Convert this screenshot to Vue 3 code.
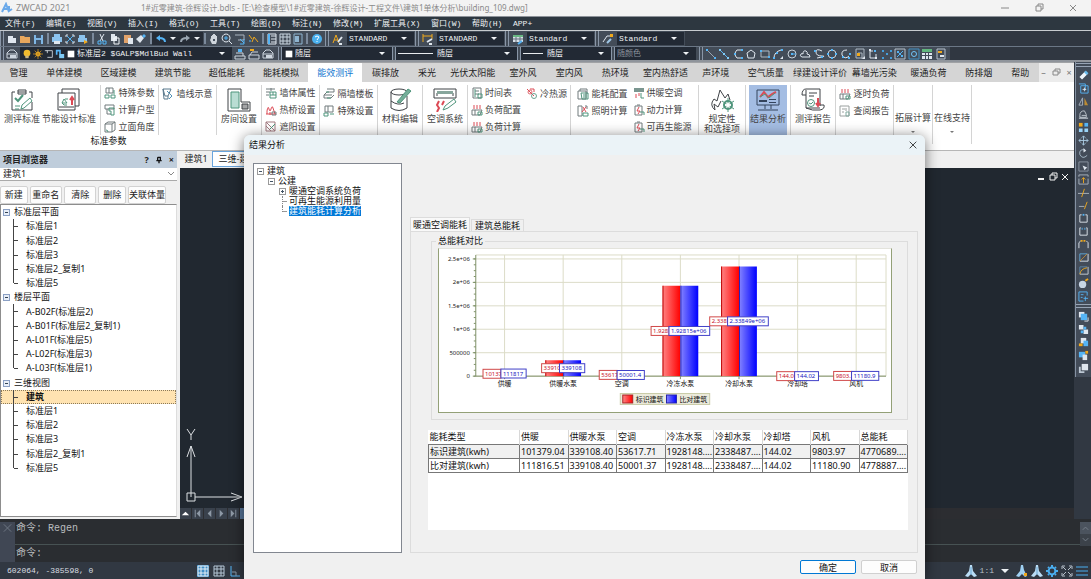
<script setup>
import { h, ref } from 'vue'

const W = '#dfe6ee', B = '#55b4f5', Y = '#f0a91c', G = '#4f957c', R = '#dc4a55', K = '#3f4347', S = '#717a7c'
const line = (d, c = W, w = 1) => `<path d="${d}" fill="none" stroke="${c}" stroke-width="${w}"/>`
const fill = (d, c = W) => `<path d="${d}" fill="${c}"/>`
const grid = (c) => line('M1 1h10v10H1zM1 4h10M1 8h10M4 1v10M8 1v10', c)
const heat = line('M3 1v4M6 1v4M9 1v4', R) + line('M1 6h10l-2 5H1zM4 6v5', S) + line('M7 8h4v3H7z', G)

const icons = {
  file: fill('M2 3h5v2h3v5H2z'),
  folder: fill('M1 3h4l1 1h5v6H1z', '#e8a75d'),
  save: fill('M2 2h9v9H2z', '#7fb6e4') + fill('M4 2h5v3H4zM4 7h5v4H4z', '#3f5268'),
  print: fill('M3 1h6v3H3zM1 4h10v5H1z', '#8cc3ee') + fill('M3 8h6v3H3z'),
  preview: line('M2 4V2h2M8 2h2v2M2 8v2h2M8 10h2V8', W) + line('M3 3l6 6M9 3L3 9', B),
  plot: fill('M2 2h6v3H2zM1 5h9v4H1z', '#8cc3ee') + fill('M7 7l4 2-4 2z', Y),
  cut: line('M4 1l3 7M8 1L4 8', W) + line('M2 8h3v3H2zM7 8h3v3H7z', B),
  copy: fill('M2 1h4v2h2v5H2z') + line('M5 5h5v6H5z', '#f5f8fb'),
  paste: fill('M2 2h7v8H2z', '#e2a36b') + fill('M6 5h5v6H6z'),
  brush: fill('M1 6l5-4 3 3-4 5z') + fill('M7 3l2-2 2 2-2 2z', B),
  undo: line('M10 9q0-4-6-4', B, 2) + fill('M1 5l4-3v6z', B),
  redo: line('M2 9q0-4 6-4', '#9aa5b1', 2) + fill('M11 5L7 2v6z', '#9aa5b1'),
  hand: fill('M3 5V3h1V2h1V1h2v1h1v1h1v5l-1 3H4L2 7z', '#cfd5dc') + fill('M5 6h2v2H5z', '#4b5563'),
  zoom: line('M5 1a4 4 0 1 0 .1 0M8 8l3 3') + line('M5 3v4M3 5h4', B),
  zoomwin: line('M1 2h9v5H4', '#aab4bf') + line('M6 6l4 4M10 6v5H6', B),
  zoomprev: line('M2 2l3 4M5 9l2-5 4 5', Y) + line('M2 8h2', B),
  props: line('M2 1h8v10H2zM5 3h5M5 6h5M5 9h5', W) + fill('M2 1h2v10H2z', B),
  design: grid('#c8d4df'),
  palette: line('M2 1h8v10H2z', '#8fb4d0') + fill('M3 3h4v6H3z', '#8fb4d0'),
  help: '<circle cx="6" cy="6" r="5" fill="#4bb0ee"/>' + line('M4 4q2-2 4 0L6 7M6 8v1', '#fff'),
  textstyle: line('M1 10L4 2l3 8M2 7h4', Y) + line('M6 9l4-5M7 11h3', W, 2),
  dim: line('M1 1v8M10 1v5M1 3h9', Y) + line('M5 9l5-3M7 11h3', W, 2),
  tablestyle: fill('M1 2h10v7H1z', '#d8dfe6') + fill('M1 2h10v2H1z', '#69b783') + line('M4 4v5M8 4v5M1 6h10', '#65717e') + line('M6 11l4-3', B, 2),
  mleader: line('M1 9l4-6h4', W) + fill('M8 1h3v3H8z', Y) + line('M5 10l4-4', '#9fc6e5', 2),
  layers: line('M1 5l3-3h4l3 3v5H1zM1 6h10', '#cdd5de') + fill('M4 7h6v3H4z', '#cdd5de'),
  layer2: line('M1 8h10v3H1zM2 5h7v3', '#cdd5de') + fill('M4 1h4v3H4z', B),
  layer3: line('M1 7h10v4H1zM2 7l2-3h6', '#cdd5de') + fill('M2 1h4v2H2z', Y),
  bulb: '<circle cx="6" cy="5" r="4" fill="#f1bb2e"/>' + fill('M4 8h4v3H4z', '#cbb782'),
  sun: '<circle cx="6" cy="6" r="3" fill="#f3b51f"/>' + line('M6 0v12M0 6h12M2 2l8 8M10 2l-8 8', '#c68d25'),
  frame: line('M3 2h7v8H4M1 2h3v3', '#d8dde3'),
  lock: line('M2 7V2h4v4', B, 2) + fill('M5 6h6v5H5z', '#7fcaf5'),
  white: fill('M2 2h8v8H2z', '#fff'),
  ln: line('M2 2l8 8', '#9aa6b3') + fill('M1 1h2v2H1zM9 9h2v2H9z', B),
  cline: line('M2 2l8 8', B) + fill('M1 1h2v2H1zM9 9h2v2H9zM5 5h2v2H5z', '#81ccf7'),
  pline: line('M9 2H5Q1 6 5 10h5', W) + fill('M9 1h2v2H9zM9 9h2v2H9zM2 5h2v2H2z', B),
  polygon: line('M6 2l4 3-1 5H3L2 5z', W, 1),
  rect: line('M2 3h8v6H2z', '#aeb8c3') + fill('M1 2h2v2H1zM9 8h2v2H9z', B),
  arc: line('M2 10Q2 4 9 2', W) + fill('M1 9h2v2H1zM4 4h2v2H4zM9 1h2v2H9z', B) + fill('M11 8v3H8z'),
  circle: '<circle cx="6" cy="6" r="4" fill="none" stroke="#c8d1da"/>' + line('M6 6h4', B) + fill('M5 5h2v2H5z', B),
  cloud: line('M3 9q-3-1-1-3 1-1 2 0 0-4 3-3 2 1 1 3 3 0 3 3z'),
  spline: line('M9 3Q3 0 3 4t6 4-5 2') + fill('M1 2h2v2H1zM8 8h2v2H8z', B),
  ellipse: '<circle cx="6" cy="6" r="4" fill="none" stroke="#c8d1da"/>' + fill('M5 1h2v2H5zM1 5h2v2H1zM9 5h2v2H9zM5 9h2v2H5z', B),
  earc: line('M7 2Q1 2 2 7q3 5 7 1') + fill('M9 5h2v2H9zM2 8h2v2H2zM8 9h2v2H8z', B),
  insert: line('M2 1h8v9H2zM4 5h4v6', '#aeb8c3') + fill('M3 5h3v3H3z', Y) + fill('M11 8v3H8z'),
  block: line('M3 3v7h6V6M3 3h3', W) + fill('M7 2h2v2H7z', B) + fill('M2 1h2v2H2zM8 9h2v2H8z'),
  point: fill('M1 2h2v2H1zM9 2h2v2H9zM5 5h2v2H5zM1 9h2v2H1zM9 9h2v2H9z', '#459edb'),
  hatch: line('M1 1h10v10H1z', '#b6c0cb') + line('M3 9l6-6M3 5l2-2M7 9l2-2M3 3l6 6', B),
  region: line('M1 1h10v10H1z', '#438fc2') + '<circle cx="6" cy="6" r="2.5" fill="none" stroke="#70c5fa"/>',
  table: fill('M1 1h10v3H1z', '#61b67d') + fill('M1 5h3v2H1zM5 5h2v2H5zM8 5h3v2H8zM1 8h3v3H1zM5 8h2v3H5zM8 8h3v3H8z'),
  mtext: line('M2 1h8v10H2z', '#b6c0cb') + fill('M3 3h4v2H3z', Y) + fill('M5 7h4v2H5z'),
  erase: line('M3 9l6-6', '#eff5fb', 4) + line('M8 4l2-2', '#69bbed', 4),
  copyobj: line('M1 1h7v7M3 3h8v8H3z', B) + line('M7 5v4M5 7h4', W),
  mirror: line('M5 2v8H1z', '#aab4bf') + fill('M7 2v8h4z', '#bb8b35'),
  offset: line('M2 7q0-5 5-5l2 4v3H2zM4 7h5', '#c0c7ce') + line('M1 10h10', W),
  array: fill('M1 1h4v4H1z', Y) + fill('M7 1h4v4H7z', B) + fill('M1 7h4v4H1zM7 7h4v4H7z', '#9ad3f6'),
  move: line('M6 1v10M1 6h10M4 3l2-2 2 2M4 9l2 2 2-2M3 4L1 6l2 2M9 4l2 2-2 2', '#a9c9e0'),
  rotate: line('M7 2Q1 1 2 7q3 6 8 1', '#a9bccb') + fill('M6 0l3 3-3 2z', W),
  scale: line('M1 1h10v10H1z', '#8c96a3') + fill('M5 5l5 2-3 3z', W),
  stretch: line('M1 3V1h10v2M1 5v6h10V5', '#abb4be') + line('M6 10V4M4 6l2-2 2 2', Y),
  trim: line('M0 7h12', '#adb5bd') + line('M7 2L4 11', Y),
  extend: line('M1 7h6', '#adb5bd') + line('M10 2L7 10', Y),
  brk: line('M4 2H2v8h8V2H8') + fill('M5 1h2v2H5z', B),
  brk2: line('M3 2H2v8h8V2H9') + fill('M4 2h1v2H4zM7 2h1v2H7z', B),
  join: line('M1 10V4l2-2M11 10V4L9 2', W) + fill('M3 1h2v2H3zM6 1h2v2H6z', Y),
  chamfer: line('M2 10V2h8', '#5fa8d8') + line('M2 10h9V2', W) + line('M2 10l8-8', '#b9893c'),
  fillet: line('M2 10V2h8', '#5b87a8') + line('M2 10h9V2', '#c9d0d7') + line('M2 10q1-6 8-7', Y),
  explode: '<circle cx="5" cy="7" r="4" fill="#c8d6e5"/>' + line('M8 3l3-2', Y, 2),
  edit: line('M1 1h9v4M1 1v10h5M3 4h3M3 7h2', B) + line('M6 8h5M8 6v5', B),
  front: fill('M1 1h6v6H1z') + fill('M3 3h7v7H3z', B) + line('M7 11h4V7'),
  back: fill('M1 1h5v5H1zM6 6h5v5H6z') + fill('M6 3h3v3H6zM3 7h3v3H3z', B),
  above: fill('M3 1h6v6H3z') + fill('M6 4h5v6H6z', B) + fill('M1 7h4v3H1z', Y),
  under: fill('M1 2h7v6H1z', B) + fill('M5 5h5v6H5z') + fill('M8 1h3v3H8z', Y),
  bring: fill('M4 1h7v7H4z') + line('M2 4v6h5', '#bdc8d4', 2),
  gridon: fill('M0 0h12v12H0z', '#3f8dc5') + grid('#e5eef5'),
  grid: grid('#b6c7d6'),
  ortho: line('M2 1v10h9', B) + line('M3 7h4v4', '#8898a8'),
  annot: fill('M5 0h2l1 6 4 5-3 1-3-3-3 3-3-1 4-5z', '#b9dcf5') + line('M6 2v8', '#6ca9d4'),
  annot2: fill('M5 0h2l1 5 3 6-2 1-3-3-3 3-3-1 4-5z', '#9fd0f2') + fill('M8 8h3v3H8z', Y),
  gear: '<circle cx="6" cy="6" r="3.4" fill="none" stroke="#4aaef0" stroke-width="2"/>' + line('M6 0v2M6 10v2M0 6h2M10 6h2M2 2l1 1M9 9l1 1M10 2L9 3M3 9l-1 1', '#4aaef0', 2),
  full: line('M1 4V1h3M8 1h3v3M1 8v3h3M11 8v3H8M2 2l3 3M10 2L7 5M2 10l3-3M10 10L7 7', '#b7c0ca'),
  burger: line('M0 2h12M0 6h12M0 10h12', '#4aaef0', 1),
  sParam: line('M2 1h7v5H2zM5 1v5', S) + line('M1 8h4v3H1zM7 8h4v3H7zM10 3v4', G),
  sCalc: line('M1 1h9v4H1zM3 5v5h4', S) + line('M5 4h5v7H7V7H5z', G),
  sCube: line('M1 3h7v8H1zM1 3l3-2h7v8l-3 2M8 3l3-2', S) + line('M2 9q2 0 2 2', G),
  sWall: line('M1 1h8L6 8v3H2zM1 1l2 7h3', '#59788c') + line('M5 3l5 5-3 3', '#5393b7'),
  sBrick: line('M1 2h9M1 5h4M1 8h3M6 1v3', S) + line('M5 5h6v6H5zM5 8h6M8 5v3', G),
  sHeat: line('M2 10V7q1-6 2-2t2 0 2-1 2 6M1 10h10M5 8v3', R) + line('M7 8h4v3H7z', S),
  sShade: line('M1 1h9v9H1zM1 1l9 9M1 5l5 5', '#a27a80') + line('M5 8l5-5', G),
  sFloor: line('M4 1h7v3H4L1 7h8M1 7v3h7l3-3', S) + line('M3 4h3M4 10h4', G),
  sSet: line('M2 1h8v6H2zM5 1v6', S) + line('M1 8h4v3H1zM7 9h4', G),
  sTime: line('M2 1h8v10H2zM4 4h4M4 7h4', S) + line('M7 7h4v4H7zM4 2v8', G),
  sLoad: heat,
  sFan: '<circle cx="4" cy="4" r="2" fill="none" stroke="#df6b72"/>' + line('M1 1l7 7M4 1h4v3', R) + '<circle cx="8" cy="8" r="2.5" fill="none" stroke="#6ca291"/>',
  sEnergy: line('M1 3h8v8H1zM3 3V1h7v5', S) + line('M4 5h7v6H5zM6 7h4M6 9h4', G),
  sLight: line('M1 1h4v10H1zM8 1h2v3', S) + line('M6 2l3 5M9 2L5 7', R) + line('M6 8h5v3H6z', G),
  sAir: fill('M1 1h10v4H1z', '#7b9690') + line('M3 7v4M6 6v3', R) + line('M8 6v5h3', G),
  sPower: line('M2 2h7v9H2zM4 1h3', S) + line('M6 3L4 7h3L5 10', R) + line('M7 8h4v3', G),
  sReport: line('M1 1h9v10H1zM3 4h3M3 7h2M7 3v3', '#9aa09f') + line('M7 7h3v4H7z', '#82aaa0'),
  bStd: line('M5 4H2v18h20v-8M8 4h8M19 4h3v6M8 2h8v4H8z', K) + line('M5 10l3 3 5-6', G, 2) + line('M11 21l1-4 8-7 2 3-8 7zM5 18h5M5 21h4', G),
  bDesign: line('M5 5V1h17v17h-4M1 5h17v17H1z', K) + line('M5 15l2-4 3 4zM5 15l2 2h3M8 11h3', G) + line('M15 17V10M13 12l2-3 2 3', R, 2) + line('M2 19h15', K),
  bRoom: line('M1 1h13v13h9v9H1z', K) + fill('M4 4h8v16H4z', '#b9ddd3') + line('M4 4h8v16H4z', G) + fill('M15 16h6v5h-6z', '#a4a5a7') + line('M15 16h6v5h-6z', K),
  bMat: '<ellipse cx="11" cy="4" rx="8" ry="3" fill="none" stroke="#3f4347"/>' + line('M3 4v16q8 5 16 0V8M3 13q7 5 13 2', K) + fill('M9 14L20 1l3 2-11 12z', '#75ad99') + line('M9 14L20 1l3 2-11 12z', G),
  bAir: line('M1 1h22v9H1zM4 8V5h16v3', K) + fill('M4 3h16v3H4z', '#87a69c') + line('M6 13l-2 4 2 3-2 4M11 13l-2 4', R, 2) + line('M10 22l2-4 9-7 2 3-8 6z', G),
  bFire: line('M5 22Q-1 17 4 11l3 2 3-11 5 8 3-4 2 6M5 22l-1-6 4 3 3-6', K, 1) + '<circle cx="18" cy="17" r="4" fill="none" stroke="#4f957c" stroke-width="2"/>' + line('M18 10v14M12 13l12 8M24 13l-12 8', G) + '<circle cx="18" cy="17" r="2" fill="#fff"/>',
  bResult: line('M1 2h22v15H1zM9 17v4M15 17v4M2 22h20', '#34445c', 1) + line('M4 9l4-5 4 5 4-3 4-2', R, 2) + line('M4 9l5-3 4 4 6-5', G) + fill('M3 12h8v2H3zM13 11h7v1h-7zM13 14h7v1h-7z', '#34445c'),
  bReport: line('M5 7H1Q1 1 5 1h14v17M5 2v18h14M5 20q6 3 14 2 5-1 4-5h-4', K) + line('M8 5h8M8 8h5', K) + '<circle cx="10" cy="15" r="3.5" fill="none" stroke="#4f957c"/>' + line('M8 15l2 1 2-2', G) + line('M17 10v7M15 15l2 3 2-3', R, 2),
}
const Icon = (p) => h('svg', { class: 'icon', viewBox: p.big ? '0 0 24 24' : '0 0 12 12', 'aria-hidden': 'true', innerHTML: icons[p.name] })
Icon.props = ['name', 'big']

const menus = ['文件(F)', '编辑(E)', '视图(V)', '插入(I)', '格式(O)', '工具(T)', '绘图(D)', '标注(N)', '修改(M)', '扩展工具(X)', '窗口(W)', '帮助(H)', 'APP+']
const fileTools = [['file', 'folder', 'save'], ['print', 'preview', 'plot'], ['cut', 'copy', 'paste', 'brush']]
const styles = [['textstyle', 'STANDARD'], ['dim', 'STANDARD'], ['tablestyle', 'Standard'], ['mleader', 'Standard']]
const drawTools = ['ln', 'cline', 'pline', 'polygon', 'rect', 'arc', 'circle', 'cloud', 'spline', 'ellipse', 'earc', 'insert', 'block', 'point', 'hatch', 'region', 'table', 'mtext']
const modifyTools = ['erase', 'copyobj', 'mirror', 'offset', 'array', 'move', 'rotate', 'scale', 'stretch', 'trim', 'extend', 'brk', 'brk2', 'join', 'chamfer', 'fillet', 'explode', 'edit']
const orderTools = ['front', 'back', 'above', 'under', 'bring']
const tabs = ['管理', '单体建模', '区域建模', '建筑节能', '超低能耗', '能耗模拟', '能效测评', '碳排放', '采光', '光伏太阳能', '室外风', '室内风', '热环境', '室内热舒适', '声环境', '空气质量', '绿建设计评价', '幕墙光污染', '暖通负荷', '防排烟', '帮助']
const activeTab = ref('能效测评')

const stdGroups = [
  { w: 'w100', big: [['bStd', '测评标准'], ['bDesign', '节能设计标准']] },
  { w: 'w57', cols: [[['sParam', '特殊参数'], ['sCalc', '计算户型'], ['sCube', '立面角度']]] },
  { w: 'w59', cols: [[['sWall', '墙线示意']]] },
]
const groups = [
  { w: 'w45', big: [['bRoom', '房间设置']] },
  { w: 'w57', cols: [[['sBrick', '墙体属性'], ['sHeat', '热桥设置'], ['sShade', '遮阳设置']]] },
  { w: 'w59', cols: [[['sFloor', '隔墙楼板'], ['sSet', '特殊设置']]] },
  { w: 'w45', big: [['bMat', '材料编辑']] },
  { w: 'w45', big: [['bAir', '空调系统']] },
  { w: 'w103', cols: [[['sTime', '时间表'], ['sLoad', '负荷配置'], ['sLoad', '负荷计算']], [['sFan', '冷热源']]] },
  { w: 'w128', cols: [[['sEnergy', '能耗配置'], ['sLight', '照明计算']], [['sAir', '供暖空调'], ['sPower', '动力计算'], ['sPower', '可再生能源']]] },
  { w: 'w47', big: [['bFire', '规定性\n和选择项']] },
  { w: 'w45', big: [['bResult', '结果分析', true]] },
  { w: 'w45', big: [['bReport', '测评报告']] },
  { w: 'w57', cols: [[['sLoad', '逐时负荷'], ['sReport', '查阅报告']]] },
  { w: 'w39', drop: '拓展计算' },
  { w: 'w39', drop: '在线支持' },
]

const project = [
  { root: '标准层平面' },
  '标准层1', '标准层2', '标准层3', '标准层2_复制1', '标准层5',
  { root: '楼层平面' },
  'A-B02F(标准层2)', 'A-B01F(标准层2_复制1)', 'A-L01F(标准层5)', 'A-L02F(标准层3)', 'A-L03F(标准层1)',
  { root: '三维视图' },
  '建筑', '标准层1', '标准层2', '标准层3', '标准层2_复制1', '标准层5',
].map((r, i, a) => ({ root: !!r.root, text: r.root || r, last: !a[i + 1] || !!a[i + 1].root, sel: r === '建筑' }))

const yOf = (v) => 128 - (v / 500000) * 23.6
const ticks = [[0, '0'], [500000, '500000'], [1e6, '1e+06'], [1.5e6, '1.5e+06'], [2e6, '2e+06'], [2.5e6, '2.5e+06']]
const minorTicks = Array.from({ length: 21 }, (_, i) => 128 - i * 5.9)
const tagWidth = (t) => [...t].reduce((s, c) => s + (c === '.' ? 2 : 3.4), 5)
const chart = [
  ['供暖', 101379, '10137', 111817, '111817'],
  ['供暖水泵', 339108, '33910', 339108, '339108'],
  ['空调', 53617, '53617', 50001, '50001.4'],
  ['冷冻水泵', 1928150, '1.928', 1928150, '1.92815e+06'],
  ['冷却水泵', 2338490, '2.338', 2338490, '2.33849e+06'],
  ['冷却塔', 144, '144.0', 144, '144.02'],
  ['风机', 9804, '9803.', 11181, '11180.9'],
].map(([name, a, at, b, bt], i) => {
  const x = 66 + i * 59
  const right = x + 9 - tagWidth(bt) / 2
  const bar = (v, t, cls, left, tagX, w) => ({ cls, left, top: yOf(v), height: 128 - yOf(v), mid: (yOf(v) + 128) / 2, text: t, tagX, w })
  return { name, x, bars: [bar(a, at, 'red', x - 18, right - 18, 18), bar(b, bt, 'blue', x, right, tagWidth(bt))] }
})
const columns = ['能耗类型', '供暖', '供暖水泵', '空调', '冷冻水泵', '冷却水泵', '冷却塔', '风机', '总能耗']
const rows = [
  ['标识建筑(kwh)', '101379.04', '339108.40', '53617.71', '1928148....', '2338487....', '144.02', '9803.97', '4770689....'],
  ['比对建筑(kwh)', '111816.51', '339108.40', '50001.37', '1928148....', '2338487....', '144.02', '11180.90', '4778887....'],
]
</script>

<template>
  <div class="app">
    <header class="titlebar">
      <svg class="logo" viewBox="0 0 12 12"><path d="M1 10L5 2l3 8M3 7h3M8 4v5l3-2" fill="none" stroke="#6aa9ea" stroke-width="2" /></svg>
      <span class="product">ZWCAD 2021</span>
      <span class="doc">1#近零建筑-徐辉设计.bdls - [E:\检查模型\1#近零建筑-徐辉设计-工程文件\建筑1单体分析\building_109.dwg]</span>
      <div class="wins">
        <button aria-label="最小化"><svg viewBox="0 0 12 12"><path d="M2 6h8" /></svg></button>
        <button aria-label="还原"><svg viewBox="0 0 12 12"><path d="M3 4h5v5H3zM5 4V2h5v5H8" /></svg></button>
        <button aria-label="关闭"><svg viewBox="0 0 12 12"><path d="M3 3l6 6M9 3l-6 6" /></svg></button>
      </div>
    </header>

    <nav class="menubar">
      <button v-for="m in menus" :key="m" :class="{ wide: m.length > 6 }">{{ m }}</button>
    </nav>

    <div class="toolrow">
      <div class="bar first">
        <i class="grip"></i>
        <template v-for="(g, i) in fileTools" :key="i">
          <div class="set"><button v-for="n in g" :key="n" :aria-label="n"><Icon :name="n" /></button></div>
          <i class="sep"></i>
        </template>
        <div class="undo">
          <button aria-label="undo"><Icon name="undo" /></button><i class="tri"></i>
          <button aria-label="redo"><Icon name="redo" /></button><i class="tri"></i>
        </div>
        <i class="sep"></i>
        <div class="set"><button v-for="n in ['hand', 'zoom', 'zoomwin', 'zoomprev']" :key="n" :aria-label="n"><Icon :name="n" /></button></div>
        <i class="sep"></i>
        <div class="set"><button v-for="n in ['props', 'design', 'palette']" :key="n" :aria-label="n"><Icon :name="n" /></button></div>
        <i class="sep"></i>
        <div class="set"><button aria-label="help"><Icon name="help" /></button></div>
      </div>
      <div v-for="(s, i) in styles" :key="i" class="bar stylebar">
        <i class="grip"></i>
        <Icon :name="s[0]" />
        <label class="drop"><select :aria-label="s[0]"><option>{{ s[1] }}</option></select><i class="tri"></i></label>
      </div>
    </div>

    <div class="toolrow second">
      <div class="bar layerbar">
        <i class="grip"></i>
        <button aria-label="图层"><Icon name="layers" /></button>
        <label class="drop">
          <Icon name="bulb" /><Icon name="sun" /><Icon name="frame" /><Icon name="lock" /><Icon name="white" />
          <select aria-label="当前图层"><option>标准层2 $GALP$MdlBud Wall</option></select><i class="tri"></i>
        </label>
        <button aria-label="layer2"><Icon name="layer2" /></button>
        <button aria-label="layer3"><Icon name="layer3" /></button>
        <button aria-label="layers"><Icon name="layers" /></button>
      </div>
      <div class="bar colorbar"><i class="grip"></i><label class="drop"><Icon name="white" /><select aria-label="颜色"><option>随层</option></select><i class="tri"></i></label></div>
      <div class="bar typebar"><i class="grip"></i><label class="drop"><i class="sample long"></i><select aria-label="线型"><option>随层</option></select><i class="tri"></i></label></div>
      <div class="bar weightbar"><i class="grip"></i><label class="drop"><i class="sample"></i><select aria-label="线宽"><option>随层</option></select><i class="tri"></i></label></div>
      <div class="bar plotbar"><i class="grip"></i><label class="drop dim"><select aria-label="打印样式"><option>随颜色</option></select><i class="tri"></i></label></div>
      <div class="bar drawbar"><i class="grip"></i><button v-for="n in drawTools" :key="n" :aria-label="n"><Icon :name="n" /></button></div>
    </div>

    <div class="workspace">
      <div class="main">
        <nav class="tabs">
          <button v-for="t in tabs" :key="t" :class="['n' + Math.min(t.length, 4), { active: t === activeTab }]" @click="activeTab = t">{{ t }}</button>
          <div class="mdi"><span>–</span><svg viewBox="0 0 12 12"><path d="M3 4h5v4H3zM5 4V2h5v4H8" /></svg><span>×</span></div>
        </nav>

        <div class="ribbon">
          <div class="section">
            <div class="groups">
              <div v-for="(g, i) in stdGroups" :key="i" class="group" :class="g.w">
                <button v-for="b in g.big" :key="b[1]" class="big"><Icon :name="b[0]" big="1" /><span>{{ b[1] }}</span></button>
                <div v-for="(c, j) in g.cols" :key="j" class="col"><button v-for="b in c" :key="b[1]" class="small"><Icon :name="b[0]" />{{ b[1] }}</button></div>
              </div>
            </div>
            <div class="caption">标准参数</div>
          </div>
          <div v-for="(g, i) in groups" :key="i" class="group" :class="[g.w, { tall: g.drop }]">
            <button v-for="b in g.big" :key="b[1]" class="big" :class="{ on: b[2] }"><Icon :name="b[0]" big="1" /><span>{{ b[1] }}</span></button>
            <div v-for="(c, j) in g.cols" :key="j" class="col"><button v-for="b in c" :key="b[1]" class="small"><Icon :name="b[0]" />{{ b[1] }}</button></div>
            <button v-if="g.drop" class="big dropbtn"><span>{{ g.drop }}</span><i class="tri"></i></button>
          </div>
        </div>

        <div class="middle">
          <aside class="panel">
            <h2>项目浏览器<span>?</span><svg viewBox="0 0 12 12"><path d="M4 2h4v5M4 2v5M2 7h8M6 7v4" /></svg><span>×</span></h2>
            <label class="project"><select aria-label="项目"><option>建筑1</option></select><svg viewBox="0 0 12 12"><path d="M3 4l3 3 3-3" /></svg></label>
            <div class="actions"><button>新建</button><button>重命名</button><button>清除</button><button>删除</button><button>关联体量</button></div>
            <div class="treebox">
              <ul>
                <li v-for="(r, i) in project" :key="i" :class="{ root: r.root, last: r.last, sel: r.sel }"><i></i>{{ r.text }}</li>
              </ul>
            </div>
          </aside>
          <section class="view">
            <nav class="doctabs"><button>建筑1</button><button class="active">三维-建筑</button></nav>
            <div class="canvas">
              <svg class="ucs" viewBox="0 0 64 80"><path d="M7 1l4 6 4-6M11 7v5M11 69V18M7 29l4-11 4 11M7 65h8v8H7zM15 69h47M51 65l11 4-11 4" fill="none" stroke="#dde0e3" /></svg>
              <div class="viewwins"><svg viewBox="0 0 12 12"><path d="M3 8h6" /></svg><svg viewBox="0 0 12 12"><path d="M3 4h5v5H3zM5 4V2h5v5H8" /></svg><svg viewBox="0 0 12 12"><path d="M3 3l6 6M9 3l-6 6" /></svg></div>
            </div>
            <div class="layouts">
              <button aria-label="布局"><svg viewBox="0 0 12 12"><path d="M2 8l4-4 4 4z" fill="#fff" /></svg></button>
              <button aria-label="首页"><svg viewBox="0 0 12 12"><path d="M3 2h1v8H3zM9 2v8L5 6z" /></svg></button>
              <button aria-label="上一页"><svg viewBox="0 0 12 12"><path d="M8 2v8L4 6z" /></svg></button>
              <button aria-label="下一页"><svg viewBox="0 0 12 12"><path d="M4 2v8l4-4z" /></svg></button>
              <button aria-label="末页"><svg viewBox="0 0 12 12"><path d="M3 2v8l4-4zM8 2h1v8H8z" /></svg></button>
              <button class="model" aria-label="模型"></button>
            </div>
          </section>
        </div>
      </div>
      <aside class="dock">
        <div class="dockbar">
          <i class="hgrip"></i>
          <button v-for="n in modifyTools" :key="n" :aria-label="n"><Icon :name="n" /></button>
          <i class="hgrip"></i>
          <button v-for="n in orderTools" :key="n" :aria-label="n"><Icon :name="n" /></button>
        </div>
      </aside>
    </div>

    <section class="command">
      <button class="shut" aria-label="关闭命令行"><svg viewBox="0 0 12 12"><path d="M2 2l8 8M10 2l-8 8" /></svg></button>
      <div class="lines">
        <p>命令: Regen</p>
        <label>命令:<input aria-label="命令" /></label>
      </div>
      <div class="scroll"><svg viewBox="0 0 12 12"><path d="M3 8l3-3 3 3" /></svg><svg viewBox="0 0 12 12"><path d="M3 4l3 3 3-3" /></svg></div>
    </section>

    <footer class="status">
      <span class="coords">602064, -385598, 0</span>
      <div class="snap"><button v-for="n in ['gridon', 'grid', 'ortho']" :key="n" :aria-label="n"><Icon :name="n" /></button></div>
      <div class="stat"><Icon name="annot" /><span>1:1</span><i class="tri"></i><Icon name="annot2" /><Icon name="annot" /><Icon name="gear" /><Icon name="full" /><Icon name="burger" /></div>
    </footer>

    <div class="dialog" role="dialog" aria-label="结果分析">
      <header>结果分析<button aria-label="关闭"><svg viewBox="0 0 12 12"><path d="M2 2l8 8M10 2l-8 8" /></svg></button></header>
      <div class="body">
        <ul class="restree">
          <li><i class="box"></i>建筑</li>
          <li class="l1"><i class="box"></i>公建</li>
          <li class="l2"><i class="box plus"></i>暖通空调系统负荷</li>
          <li class="l2"><i class="branch"></i>可再生能源利用量</li>
          <li class="l2"><i class="branch end"></i><b>建筑能耗计算分析</b></li>
        </ul>
        <div class="result">
          <div class="rtabs"><button class="active">暖通空调能耗</button><button>建筑总能耗</button></div>
          <div class="page">
            <fieldset>
              <legend>总能耗对比</legend>
              <svg class="chart" viewBox="0 0 455 164">
                <defs>
                  <linearGradient id="gr"><stop offset="0" stop-color="#ff8585" /><stop offset="1" stop-color="#ff0000" /></linearGradient>
                  <linearGradient id="gb"><stop offset="0" stop-color="#8585ff" /><stop offset="1" stop-color="#0000ff" /></linearGradient>
                </defs>
                <path class="gridline" d="M37 6h413v122" />
                <path v-for="t in ticks" :key="t[1]" class="gridline" :d="`M37 ${yOf(t[0])}H450`" />
                <path v-for="c in chart" :key="c.name" class="gridline" :d="`M${c.x} 6V128`" />
                <path class="axis" d="M37 6V128H450" />
                <path v-for="m in minorTicks" :key="m" class="axis" :d="`M35 ${m}h2`" />
                <g v-for="t in ticks" :key="t[0]"><path class="axis" :d="`M34 ${yOf(t[0])}h3`" /><text x="31" :y="yOf(t[0]) + 2" text-anchor="end">{{ t[1] }}</text></g>
                <g v-for="c in chart" :key="c.x">
                  <path class="axis" :d="`M${c.x} 128v3`" />
                  <g v-for="b in c.bars" :key="b.cls" :class="b.cls">
                    <rect class="fillbar" :x="b.left" :y="b.top" width="18" :height="b.height" />
                    <path class="edge" :d="`M${b.left + 0.5} ${b.top}v${b.height}`" />
                  </g>
                  <text class="cat" :x="c.x" y="138" text-anchor="middle">{{ c.name }}</text>
                </g>
                <g v-for="c in chart" :key="c.name">
                  <g v-for="b in c.bars" :key="b.cls" :class="b.cls">
                    <rect class="tag" :x="b.tagX" :y="b.mid - 4.5" :width="b.w" height="9" />
                    <text :x="b.tagX + 2" :y="b.mid + 2">{{ b.text }}</text>
                  </g>
                </g>
                <rect x="182.5" y="145.5" width="90" height="11" fill="#ecebdc" stroke="#c9cba6" />
                <rect x="185" y="147" width="10" height="8" fill="url(#gr)" stroke="#a22" />
                <text class="cat" x="198" y="154">标识建筑</text>
                <rect x="229" y="147" width="10" height="8" fill="url(#gb)" stroke="#22a" />
                <text class="cat" x="242" y="154">比对建筑</text>
              </svg>
            </fieldset>
            <div class="tablebox">
              <table>
                <thead><tr><th v-for="c in columns" :key="c">{{ c }}</th></tr></thead>
                <tbody><tr v-for="r in rows" :key="r[0]"><td v-for="(c, i) in r" :key="i">{{ c }}</td></tr></tbody>
              </table>
            </div>
          </div>
        </div>
      </div>
      <footer><button class="ok">确定</button><button>取消</button></footer>
    </div>
  </div>
</template>

<style>
body { margin: 0; overflow: hidden; }
</style>

<style scoped>
.app { --sans: "Noto Sans", "Noto Sans CJK SC", sans-serif; --mono: "Liberation Mono", "Noto Sans CJK SC", monospace; position: relative; display: flex; flex-direction: column; height: 100vh; overflow: hidden; background: #313842; font: 9px/12px var(--sans); color: #222; }
.app *, .app *::before, .app *::after { box-sizing: border-box; }
button, select, input { margin: 0; padding: 0; border: 0; background: none; font: inherit; color: inherit; border-radius: 0; white-space: nowrap; }
select { appearance: none; min-width: 0; flex: 1; outline: 0; }
ul, p, h2 { margin: 0; padding: 0; list-style: none; }
svg { display: block; flex: none; width: 12px; height: 12px; }
i { display: block; flex: none; font-style: normal; }
.tri { width: 0; height: 0; border: 3px solid transparent; border-top: 3px solid #eef1f4; border-bottom: 0; }

.titlebar { display: flex; align-items: center; flex: none; height: 17px; background: #f3f3f3; border-bottom: 1px solid #8d9299; color: #8a8a8a; padding-left: 1px; }
.logo { margin-right: 3px; }
.product { width: 125px; }
.doc { flex: 1; font-size: 8px; }
.wins { display: flex; gap: 22px; padding-right: 12px; }
.wins svg, .mdi svg { fill: none; stroke: #888; }

.menubar { display: flex; flex: none; height: 14px; padding-left: 5px; background: #2d3740; border-bottom: 1px solid #c7cbcf; color: #eef1f3; font: 8px/12px var(--mono); }
.menubar button { width: 41px; text-align: left; }
.menubar .wide { width: 57px; }

.toolrow { display: flex; flex: none; height: 15px; background: #303741; color: #f0f2f4; font: 8px/12px var(--mono); }
.toolrow.second { height: 16px; border-bottom: 2px solid #8f949b; border-top: 1px solid #6b7786; }
.bar { display: flex; align-items: center; background: #434c58; }
.grip { width: 4px; height: 100%; border-left: 1px solid #8996a7; border-right: 1px solid #8996a7; }
.sep { width: 2px; height: 11px; background: #7b899b; }
.set { display: flex; gap: 1px; padding: 0 2px; }
.set button { width: 12px; }
.first { width: 325px; justify-content: space-between; }
.undo { display: flex; align-items: center; gap: 3px; height: 13px; padding: 0 3px; background: #262c36; }
.undo button { width: 12px; }
.stylebar { width: 90px; padding-right: 1px; }
.stylebar .icon { margin: 0 3px; }
.drop { display: flex; align-items: center; flex: 1; height: 13px; padding: 0 7px 0 2px; background: #222934; gap: 1px; }
.drop .icon { width: 10px; height: 10px; }
.drop select { height: 12px; }
.drop.dim { color: #8c939c; }
.sample { width: 20px; height: 1px; margin-right: 3px; background: #e8ebee; }
.sample.long { width: 35px; }
.layerbar { width: 278px; gap: 2px; padding-right: 4px; }
.colorbar { width: 114px; }
.typebar { width: 125px; }
.weightbar { width: 94px; }
.plotbar { width: 88px; }
.plotbar .drop { margin-right: 3px; }
.drawbar { width: 251px; justify-content: space-between; padding-right: 3px; }

.workspace { display: flex; flex: 1; min-height: 0; }
.main { display: flex; flex-direction: column; flex: 1; min-width: 0; }
.tabs { display: flex; flex: none; height: 20px; background: #d5d5d5; border-top: 1px solid #a0a2a5; }
.tabs button { flex: 54 1 0; min-width: 0; overflow: hidden; color: #222; }
.tabs .n3 { flex-grow: 46; }
.tabs .n2 { flex-grow: 37; }
.tabs .active { background: #fff; color: #1678cf; }
.mdi { flex: 35 1 0; display: flex; justify-content: space-around; align-items: center; background: #ececec; color: #777; }

.ribbon { display: flex; flex: none; height: 69px; background: #fff; border-bottom: 1px solid #b6b6b6; padding-top: 3px; }
.section { height: 100%; }
.groups { display: flex; }
.group { display: flex; height: 50px; border-right: 1px solid #d4d4d4; justify-content: center; }
.group.tall { height: 59px; }
.caption { text-align: center; line-height: 12px; color: #111; }
.w39 { width: 39px; } .w45 { width: 45px; } .w47 { width: 47px; } .w57 { width: 58px; } .w59 { width: 58px; } .w100 { width: 101px; } .w103 { width: 103px; } .w128 { width: 128px; }
.big { display: flex; flex-direction: column; align-items: center; padding-top: 3px; color: #444; flex: 0 1 auto; }
.big + .big { margin-left: 2px; }
.big .icon { width: 24px; height: 24px; }
.big span { line-height: 10px; padding-top: 2px; white-space: pre; }
.big.on { background: #a4bde3; padding-left: 1px; padding-right: 1px; }
.dropbtn { padding-top: 26px; }
.dropbtn .tri { margin-top: 8px; border-width: 2px; border-bottom: 0; border-top-color: #777; }
.col { display: flex; flex-direction: column; }
.col + .col { margin-left: 5px; }
.small { display: flex; align-items: center; gap: 2px; height: 17px; color: #444; }

.middle { display: flex; flex: 1; min-height: 0; background: #f0f0f0; }
.panel { display: flex; flex-direction: column; width: 177px; margin-right: 3px; }
.panel h2 { display: flex; align-items: center; gap: 6px; height: 17px; padding: 0 3px; font: bold 9px/12px var(--sans); background: #bfcddb; }
.panel h2 span:first-of-type { margin-left: auto; }
.panel h2 svg { width: 8px; height: 10px; fill: none; stroke: #111; stroke-width: 2; }
.project { display: flex; align-items: center; height: 13px; background: #fff; border-bottom: 1px solid #aaa; padding: 0 0 0 3px; }
.project svg { fill: none; stroke: #888; }
.actions { display: flex; gap: 2px; padding: 5px 11px 0 0; }
.actions button { flex: 32 1 0; height: 18px; background: #fdfdfd; border: 1px solid #d2d2d2; border-radius: 2px; }
.actions button:first-child, .actions button:nth-child(4) { flex-grow: 27; }
.actions button:last-child { flex-grow: 37; }
.treebox { flex: 1; min-height: 0; margin-bottom: 2px; background: #fff; border: 1px solid #8d8d8d; border-right-color: #ddd; }
.treebox ul { display: grid; grid-auto-rows: 1fr; height: 270px; }
.treebox li { position: relative; display: flex; align-items: center; padding-left: 25px; color: #111; }
.treebox li i { position: absolute; left: 12px; top: 0; width: 4px; height: 100%; border-left: 1px solid #444; }
.treebox li i::after { content: ""; position: absolute; top: 7px; left: 0; width: 4px; height: 1px; background: #444; }
.treebox .last i { height: 7px; }
.treebox .root { padding-left: 13px; }
.treebox .root i { left: 2px; top: 4px; width: 7px; height: 7px; border: 1px solid #8ba0c4; background: #e8eef8; }
.treebox .root i::after { top: 2px; left: 1px; width: 3px; background: #345; }
.treebox .sel { background: #ffe3b1; outline: 1px dotted #8b7a5a; outline-offset: -1px; font-weight: bold; }

.view { display: flex; flex-direction: column; flex: 1; min-width: 0; }
.doctabs { display: flex; flex: none; height: 17px; }
.doctabs button { width: 32px; height: 16px; }
.doctabs .active { width: 52px; background: #fff; border: 1px solid #6aa5dd; }
.canvas { display: flex; justify-content: space-between; flex: 1; min-height: 0; background: #212830; }
.ucs { align-self: flex-end; width: 64px; height: 80px; }
.viewwins { display: flex; padding: 3px 3px 0 0; }
.viewwins svg { fill: none; stroke: #f2f2f2; stroke-width: 1; }
.viewwins svg:first-child { stroke-width: 2; }
.layouts { display: flex; gap: 1px; flex: none; height: 11px; background: #2c2d31; }
.layouts button { width: 11px; height: 11px; background: #39414c; }
.layouts svg { width: 11px; height: 11px; fill: #8e99a6; }
.layouts .model { width: 40px; background: #5a789c; }

.dock { width: 17px; background: #313842; padding-left: 1px; }
.dockbar { display: flex; flex-direction: column; align-items: center; background: #434c59; border-left: 1px solid #8592a3; padding-bottom: 2px; }
.dockbar button { height: 13px; width: 12px; padding: 1px 1px 1px 0; }
.dockbar .icon { width: 11px; height: 11px; }
.hgrip { width: 100%; height: 4px; border-top: 1px solid #97a4b5; border-bottom: 1px solid #97a4b5; margin: 1px 0 2px; }

.command { display: flex; flex: none; height: 43px; padding-top: 3px; background: #2a2d31; color: #b9bcbf; font: 10px/14px var(--mono); }
.shut { display: flex; width: 15px; padding: 0 2px; background: #404754; }
.shut svg { width: 11px; fill: none; stroke: #717985; }
.lines { flex: 1; }
.lines p { height: 23px; padding: 0 1px; border-bottom: 1px solid #475253; }
.lines label { display: flex; align-items: center; height: 17px; padding-left: 1px; }
.lines input { flex: 1; outline: 0; }
.scroll { width: 11px; height: 24px; background: #3c424a; }
.scroll svg { width: 11px; fill: none; stroke: #78818c; }
.scroll svg:first-child { background: #4b535e; }

.status { display: flex; align-items: center; flex: none; height: 17px; padding: 0 3px 0 7px; background: #313842; color: #d8dce0; font: 8px/12px var(--mono); }
.coords { width: 190px; }
.snap { display: flex; gap: 4px; }
.stat { display: flex; align-items: center; gap: 3px; margin-left: auto; }
.stat .tri { margin: 0 4px; border-width: 4px; border-bottom: 0; }
.stat .icon:first-child { margin-left: 0; }
.stat span { color: #b9c0c8; }

.dialog { position: absolute; left: 244px; right: 166px; top: 135px; bottom: 0; display: flex; flex-direction: column; background: #f0f0f0; border-radius: 6px 6px 0 0; box-shadow: 0 2px 14px rgba(0, 0, 0, .55); color: #111; }
.dialog header { display: flex; align-items: center; justify-content: space-between; flex: none; height: 20px; padding: 0 6px 0 5px; background: #ebf3f7; border-radius: 6px 6px 0 0; }
.dialog header svg { width: 12px; height: 10px; fill: none; stroke: #222; }
.body { display: flex; flex: 1; min-height: 0; gap: 8px; padding: 8px 7px 0 9px; }
.restree { width: 149px; background: #fff; border: 1px solid #828790; padding: 2px 3px; line-height: 10px; }
.restree li { display: flex; align-items: center; height: 10px; white-space: nowrap; }
.restree .l1 { padding-left: 11px; }
.restree .l2 { padding-left: 22px; }
.box { position: relative; width: 7px; height: 7px; margin-right: 3px; border: 1px solid #9a9a9a; }
.box::after { content: ""; position: absolute; left: 1px; top: 2px; width: 3px; height: 1px; background: #456; }
.plus::before { content: ""; position: absolute; left: 2px; top: 1px; width: 1px; height: 3px; background: #456; }
.branch { width: 7px; height: 10px; margin: 0 0 0 3px; border-left: 1px dotted #888; background: linear-gradient(#999, #999) 0 5px / 4px 1px no-repeat; }
.branch.end { height: 6px; align-self: flex-start; }
.restree b { display: block; height: 10px; font-weight: normal; background: #0078d7; color: #fff; }
.result { display: flex; flex-direction: column; flex: 1; min-width: 0; padding-top: 54px; }
.rtabs { display: flex; align-items: flex-end; height: 14px; gap: 1px; }
.rtabs button { height: 12px; padding: 0 3px; border: 1px solid #dcdcdc; border-bottom: 0; line-height: 11px; }
.rtabs .active { height: 14px; padding: 0 2px; background: #f9f9f9; }
.page { flex: 1; display: flex; flex-direction: column; padding: 3px 9px 0 17px; border: 1px solid #dcdcdc; min-height: 0; }
fieldset { min-width: 0; margin: 0 0 10px 3px; padding: 1px 15px 6px 6px; border: 1px solid #dcdcdc; }
legend { padding: 0 2px; margin-left: -2px; line-height: 12px; height: 12px; }
.chart { width: 100%; height: auto; background: #fff; border: 1px solid #93a077; border-top-color: #e3e3dc; }
.chart text { font: 6px "Noto Sans", sans-serif; fill: #222; }
.chart .cat { font: 7px "Noto Sans CJK SC", sans-serif; fill: #111; }
.gridline { fill: none; stroke: #dcdcc8; }
.axis { fill: none; stroke: #7f9168; }
.red .fillbar { fill: url(#gr); } .red .edge { stroke: #b00; }
.blue .fillbar { fill: url(#gb); } .blue .edge { stroke: #22b; }
.tag { fill: #fff; }
.red .tag { stroke: #d04848; } .blue .tag { stroke: #4040c8; }
.chart .red text { fill: #c8102a; } .chart .blue text { fill: #1717c0; }
.tablebox { height: 100px; background: #fff; overflow: hidden; }
table { width: 100%; table-layout: fixed; border-collapse: collapse; }
th, td { height: 14px; padding: 0 1px; font-weight: normal; text-align: left; white-space: nowrap; overflow: hidden; line-height: 12px; }
th { border-right: 1px solid #d8d8d8; height: 15px; }
td { border: 1px solid #777; }
th:first-child { width: 19%; }
tbody tr:first-child { background: #f0f0f0; }
.dialog footer { display: flex; justify-content: flex-end; flex: none; gap: 5px; padding: 7px 8px 5px; }
.dialog footer button { width: 56px; height: 14px; background: #fdfdfd; border: 1px solid #d0d0d0; border-radius: 2px; line-height: 11px; }
.dialog footer .ok { border-color: #0078d4; }
</style>
